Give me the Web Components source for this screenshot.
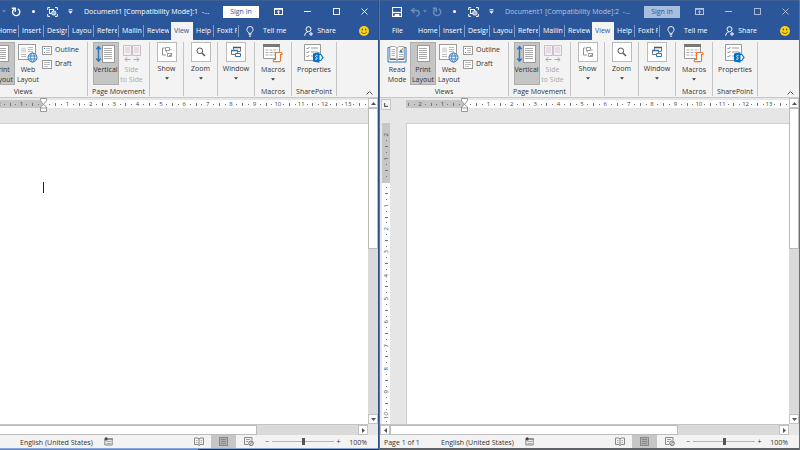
<!DOCTYPE html>
<html lang="en">
<head>
<meta charset="utf-8">
<title>Document1 - Word</title>
<style>
html, body { margin: 0; height: 100%; overflow: hidden; background: #dadada; }
body { font: 7px/10px "Open Sans", "Noto Sans", sans-serif; color: #333; }
</style>
</head>
<body>
<split-desktop>
  <word-window slot="left" active number="1"></word-window>
  <word-window slot="right" number="2"></word-window>
</split-desktop>

<script>
const define = (name, html, setup) => {
  const template = document.createElement('template');
  template.innerHTML = html;
  customElements.define(name, class extends HTMLElement {
    constructor() {
      super();
      this.attachShadow({ mode: 'open' });
    }
    connectedCallback() {
      if (this.shadowRoot.childNodes.length) return;
      const copy = template.content.cloneNode(true);
      if (setup) setup(this, copy);
      this.shadowRoot.append(copy);
    }
  });
};

const lines = (x1, x2, ys, color) => ys.map(y => `<path d="M${x1} ${y}H${x2}" stroke="${color}"/>`).join('');
const sheet = (x, y, w, h) => `<rect x="${x}.5" y="${y}.5" width="${w}" height="${h}" fill="#fff" stroke="#999"/>`;

const icons = {
  save: [10, 10, `<path d="M.5 .5h9v9h-9z" fill="none" stroke="#fff" stroke-width="1.200"/><path d="M1 5.500h8" stroke="#fff" stroke-width="1.200"/><path d="M3 9V7.500h4v1.500" fill="#fff" stroke="#fff"/>`],
  undo: [10, 10, `<path d="M4.500 1 1.500 3.500 4.500 6M1.500 3.500H6.500a2.500 2.500 0 0 1 0 5.500" fill="none" stroke="currentColor" stroke-width="1.300"/>`],
  redo: [10, 10, `<path d="M6.800 1.800A3.600 3.600 0 1 1 2.800 2.300M.8 1.300h3.400v3.400" fill="none" stroke="currentColor" stroke-width="1.400"/>`],
  group: [11, 10, `<path d="M.7 3V.6h2.400M8 .6h2.400V3M10.400 7v2.400H8M3 9.400H.7V7" fill="none" stroke="#fff"/><rect x="2.500" y="2.500" width="4" height="4" fill="none" stroke="#fff"/><circle cx="6.800" cy="6" r="2.200" fill="#9db4d8" stroke="#fff" stroke-width=".8"/>`],
  more: [5, 5, `<path d="M.5 .8h4" stroke="#fff"/><path d="M.3 2.300h4.400L2.500 4.700z" fill="#fff"/>`],
  caret: [4, 3, `<path d="M0 .3h4L2 2.600z" fill="currentColor"/>`],
  display: [9, 7, `<rect x=".5" y=".5" width="8" height="6" fill="none" stroke="currentColor"/><path d="M1 1.300h7" stroke="currentColor"/><path d="M4.500 6V3M3 4.300 4.500 2.900 6 4.300" fill="none" stroke="currentColor" stroke-width=".9"/>`],
  min: [7, 7, `<path d="M0 3.500h7" stroke="currentColor"/>`],
  max: [7, 7, `<rect x=".5" y=".5" width="6" height="6" fill="none" stroke="currentColor" stroke-width=".9"/>`],
  close: [7, 7, `<path d="M.5 .5l6 6M6.500 .5l-6 6" stroke="currentColor" stroke-width=".9"/>`],
  bulb: [8, 11, `<path d="M2.700 7.300C2.600 6 .9 5.400 .9 3.600a3.100 3.100 0 0 1 6.200 0c0 1.800-1.700 2.400-1.800 3.700zM2.700 8.700h2.600M3 10.200h2" fill="none" stroke="#fff" stroke-width=".9"/>`],
  share: [9, 10, `<circle cx="4.500" cy="3.200" r="2.500" fill="none" stroke="#fff"/><path d="M.7 9.700c.2-2.500 1.600-3.700 3.300-3.900M5 8h4M7 6v4" fill="none" stroke="#fff"/>`],
  smiley: [10, 10, `<circle cx="5" cy="5" r="5" fill="#fcd116"/><ellipse cx="3.300" cy="3.600" rx=".7" ry="1" fill="#5c4a00"/><ellipse cx="6.700" cy="3.600" rx=".7" ry="1" fill="#5c4a00"/><path d="M2 5.800q3 3.600 6 0" fill="none" stroke="#5c4a00" stroke-width=".8"/>`],
  read: [20, 18, `<path d="M1 2.500h2v12h6.500l.5 1 .5-1H17v-12h2V17H1z" fill="#fff" stroke="#2e75b6"/><path d="M3 1.500h5l2 1.500 2-1.500h5v12h-5l-2 1.500-2-1.500H3z" fill="#fff" stroke="#999" stroke-width=".8"/><path d="M10 3v12" stroke="#999"/>${lines(4.500, 8, [4.500, 6.500, 8.500, 10.500], '#b5b5b5')}${lines(12, 16, [9.500, 11.500], '#b5b5b5')}<path d="M12 7.500l2-3.500 2 3.500z" fill="#2e75b6"/><circle cx="15.500" cy="4" r="1" fill="#e8a33d"/>`],
  print: [14, 18, `${sheet(1, 0, 12, 16)}${lines(3, 11, [3.500, 5.500, 7.500, 9.500, 11.500, 13.500], '#aaa')}`],
  web: [20, 19, `${sheet(0, 0, 17, 15)}<path d="M3 3.500h5v5H3z" fill="#ddd"/>${lines(3, 8, [10.500, 12.500], '#bbb')}${lines(10, 15, [3.500, 5.500, 7.500], '#bbb')}<circle cx="14.500" cy="13.500" r="4.500" fill="#dcebf8" stroke="#2e75b6"/><ellipse cx="14.500" cy="13.500" rx="1.900" ry="4.500" fill="none" stroke="#2e75b6" stroke-width=".8"/><path d="M10.500 12h8M10.500 15h8" stroke="#2e75b6" stroke-width=".8"/>`],
  outline: [10, 9, `${sheet(0, 0, 9, 8)}<path d="M2 2.500h1M2 6.500h1" stroke="#2e75b6"/>${lines(4, 8, [2.500, 4.500, 6.500], '#bbb')}`],
  draft: [10, 9, `${sheet(0, 0, 9, 8)}${lines(2, 8, [2.500, 4.500], '#bbb')}${lines(2, 6, [6.500], '#bbb')}`],
  vertical: [20, 18, `${sheet(6, 0, 12, 17)}${lines(8, 16, [3.500, 5.500, 7.500, 9.500, 11.500, 13.500], '#aaa')}<path d="M2.500 2v14M.3 4.300 2.500 1.700 4.700 4.300M.3 13.500 2.500 16.200 4.700 13.500" fill="none" stroke="#2e75b6" stroke-width="1.400"/>`],
  side: [18, 18, `<path d="M.5 .5h8v10h-8zM9.500 .5h8v10h-8z" fill="#f7eef4" stroke="#cbbfc8"/>${lines(2, 7, [3, 5, 7], '#d3c9d0')}${lines(11, 16, [3, 5, 7], '#d3c9d0')}<path d="M2 14.500h5.500M4.200 12.300 2 14.500l2.200 2.200M10.500 14.500H16M13.800 12.300 16 14.500l-2.200 2.200" fill="none" stroke="#aaa"/>`],
  show: [12, 12, `<path d="M4.500 1.500h4v3h-4zM6.500 7.500h4v3h-4z" fill="#fff" stroke="#808080" stroke-width=".8"/><path d="M3.500 2H1.500v7H5M4.500 4.500l1.500 2M9 4.500l1.500-1.500M8 9l1 1 2-2.500" fill="none" stroke="#777" stroke-width=".8"/>`],
  zoom: [10, 10, `<circle cx="3.800" cy="3.800" r="2.800" fill="none" stroke="#555"/><path d="M6 6l3 3" stroke="#555" stroke-width="1.500"/>`],
  window: [12, 12, `<path d="M3.500 1.500h7v4h-7z" fill="#fff" stroke="#777"/><path d="M3 1.500h8" stroke="#555" stroke-width="1.500"/><path d="M1.500 4.500h6v4h-6z" fill="#fff" stroke="#777"/><path d="M1 4.500h7" stroke="#2e75b6" stroke-width="1.500"/><path d="M5.500 7.500h5v3h-5z" fill="#fff" stroke="#2e75b6"/>`],
  macros: [20, 19, `<path d="M.5 .5h16v14H.5z" fill="#fff" stroke="#999"/><path d="M0 1.500h17" stroke="#777" stroke-width="3"/>${[6, 8.500, 11].map(y => `<path d="M2.500 ${y}H15" stroke="#aaa" stroke-dasharray="3 1"/>`).join('')}<path d="M12.500 8.500h5.500a1 1 0 0 1 1 1v1h-1.500v6a1.200 1.200 0 0 1-1.200 1.200H11a1.200 1.200 0 0 1 0-2.200h1.500z" fill="#fff" stroke="#e8762d" stroke-width="1.200"/>`],
  properties: [20, 19, `<path d="M.5 .5h16v16H.5z" fill="#fff" stroke="#999"/>${lines(7, 14, [4, 8, 12], '#999')}<path d="M2.500 4l1 1 2-2M2.500 8l1 1 2-2M2.500 12l1 1 2-2" fill="none" stroke="#666" stroke-width=".8"/><path d="M14 10.500h2.800l2.200 3-2.200 3H14z" fill="#fff" stroke="#0072c6" stroke-width="1.200"/><path d="M9 9.500l6.500-1.300v10.600L9 17.500z" fill="#0072c6"/><path d="M13.500 11.700c-1.300-.8-2.500.3-1.500 1.300.8.700 1.500 1 1 1.900-.5.700-1.400.4-2 0" fill="none" stroke="#fff" stroke-width=".9"/>`],
  chevron: [7, 4, `<path d="M.5 3.500l3-3 3 3" fill="none" stroke="#555"/>`],
  up: [5, 3, `<path d="M0 3l2.500-3L5 3z" fill="#555"/>`],
  down: [5, 3, `<path d="M0 0l2.500 3L5 0z" fill="#555"/>`],
  left: [3, 5, `<path d="M3 0L0 2.500 3 5z" fill="#555"/>`],
  right: [3, 5, `<path d="M0 0l3 2.500L0 5z" fill="#555"/>`],
  tabstop: [5, 4, `<path d="M.6 0v3.400H4" fill="none" stroke="#666" stroke-width="1.200"/>`],
  indent: [7, 14, `<path d="M.5 .5h6v2.200L3.500 6.500.5 2.700zM3.500 6.500l3 2.500v4.500h-6V9zM.5 10h6" fill="#fff" stroke="#8c8c8c" stroke-width=".9"/>`],
  record: [9, 9, `<path d="M.8 2.500v5.500h7.400V2.500" fill="#eee" stroke="#888"/><path d="M4 2h5" stroke="#777" stroke-width="1.500"/><circle cx="2.200" cy="1.900" r="1.700" fill="#444"/>${lines(2.500, 7, [4.500, 6.500], '#aaa')}`],
  book: [10, 9, `<path d="M.5 1h3.500l1 1 1-1h3.500v6.500H6l-1 1-1-1H.5zM5 2v7" fill="none" stroke="#888"/><path d="M2 3.500h1.500M2 5.500h1.500M6.500 3.500H8M6.500 5.500H8" stroke="#999" stroke-width=".8"/>`],
  layout: [9, 9, `<rect x=".5" y=".5" width="8" height="8" fill="#b0b0b0" stroke="#888"/>${lines(2, 7, [2.500, 4.500, 6.500], '#888')}`],
  webview: [10, 9, `<path d="M4 7.500H.5v-7h7.500v3" fill="none" stroke="#888"/>${lines(2, 6, [2.500], '#999')}${lines(2, 4, [4.500], '#999')}<circle cx="7" cy="6.300" r="2.300" fill="#ddd" stroke="#777"/><path d="M5.500 7.800l3-3" stroke="#777" stroke-width=".8"/>`]
};

define('ui-icon', `<style>:host{display:inline-block;flex:none;line-height:0}svg{display:block}</style>`, (host, copy) => {
  const [w, h, body] = icons[host.getAttribute('name')];
  const box = document.createElement('div');
  box.innerHTML = `<svg width="${w}" height="${h}" viewBox="0 0 ${w} ${h}" aria-hidden="true">${body}</svg>`;
  copy.append(box.firstChild);
});

define('split-desktop', `<style>
:host{display:grid;grid-template-columns:379fr 421fr;height:100vh;overflow:hidden}
div{min-width:0;overflow:hidden;display:grid}
.left ::slotted(*){margin-left:-42px}
</style><div class="left"><slot name="left"></slot></div><div><slot name="right"></slot></div>`);

define('title-bar', `<style>
:host{display:flex;align-items:center;height:22px;box-sizing:border-box;padding-left:6px;border-top:1px solid #3d5f92;background:#2b579a;color:#fff;--dim:#6e8dbd}
:host([inactive]){color:#b3c4de}
button{all:unset;display:flex;align-items:center;justify-content:center;height:20px}
.save{width:22px}.undo{width:21px;gap:3px;color:var(--dim)}.redo{width:16px;color:#fff}
:host([inactive]) .redo{color:var(--dim)}
.touch{width:18px}.dot{width:3px;height:3px;border-radius:50%;background:#fff}
.group{width:20px}.more{width:16px}
h1{all:unset;flex:1;min-width:0;padding-left:6px;white-space:pre;overflow:hidden}
.sign{width:36px;height:12px;background:#fff;color:#2b579a;margin-right:5px}
:host([inactive]) .sign{background:#a9bedd}
.win{width:29px}.end{width:28px}
</style>
<button class="save" aria-label="Save"><ui-icon name="save"></ui-icon></button>
<button class="undo" aria-label="Undo"><ui-icon name="undo"></ui-icon><ui-icon name="caret"></ui-icon></button>
<button class="redo" aria-label="Redo"><ui-icon name="redo"></ui-icon></button>
<button class="touch" aria-label="Touch mode"><span class="dot"></span></button>
<button class="group" aria-label="Group"><ui-icon name="group"></ui-icon></button>
<button class="more" aria-label="Customize toolbar"><ui-icon name="more"></ui-icon></button>
<h1><slot></slot></h1>
<button class="sign">Sign in</button>
<button class="win" aria-label="Ribbon display"><ui-icon name="display"></ui-icon></button>
<button class="win" aria-label="Minimize"><ui-icon name="min"></ui-icon></button>
<button class="end" aria-label="Maximize"><ui-icon name="max"></ui-icon></button>
<button class="end" aria-label="Close"><ui-icon name="close"></ui-icon></button>`);

define('ribbon-tab', `<style>
:host{display:block;flex:none;width:25px}
button{all:unset;display:block;box-sizing:border-box;width:100%;height:18px;padding:0 2px 0 3px}
span{display:block;overflow:hidden;white-space:nowrap;line-height:18px}
:host([sep]) button{background:linear-gradient(#7d99c6,#7d99c6) right center/1px 12px no-repeat}
:host([selected]) button{background:#f3f3f3;color:#2b579a}
</style><button role="tab"><span><slot></slot></span></button>`);

define('tab-strip', `<style>
:host{display:flex;height:18px;background:#2b579a;color:#fff}
button{all:unset;display:flex;align-items:center;gap:4px;white-space:nowrap}
.file{width:35px;justify-content:center}
.tell{padding-left:7px;gap:9px}.share{margin-left:auto;margin-right:23px}.smile{margin-right:9px}
ribbon-tab.wide{width:27px}ribbon-tab.view{width:22px}ribbon-tab.help{width:21px}
</style>
<button class="file">File</button>
<ribbon-tab sep>Home</ribbon-tab><ribbon-tab sep>Insert</ribbon-tab><ribbon-tab sep>Design</ribbon-tab><ribbon-tab sep aria-label="Layout">Layou</ribbon-tab><ribbon-tab sep aria-label="References">Refere</ribbon-tab><ribbon-tab sep aria-label="Mailings">Mailin</ribbon-tab><ribbon-tab class="wide">Review</ribbon-tab><ribbon-tab class="view" selected>View</ribbon-tab><ribbon-tab sep class="help">Help</ribbon-tab><ribbon-tab sep>Foxit F</ribbon-tab>
<button class="tell"><ui-icon name="bulb"></ui-icon>Tell me</button>
<button class="share"><ui-icon name="share"></ui-icon>Share</button>
<button class="smile" aria-label="Feedback"><ui-icon name="smiley"></ui-icon></button>`);

define('ribbon-button', `<style>
:host{display:block;flex:none;width:26px}
button{all:unset;display:flex;flex-direction:column;align-items:center;box-sizing:border-box;width:100%;height:43px;text-align:center;white-space:nowrap}
.art{flex:none;height:23px;display:flex;align-items:center;justify-content:center;box-sizing:border-box}
.label{width:max-content}
:host([selected]) button{background:#c5c5c5;box-shadow:inset 0 0 0 1px #adadad}
:host([disabled]) button{color:#aaa}
:host([boxed]) .art{width:20px;height:20px;background:#fff;border:1px solid #bbb;margin-bottom:2px}
ui-icon.drop{margin-top:3px}
</style><button><span class="art"></span><span class="label"><slot></slot></span></button>`, (host, copy) => {
  const icon = document.createElement('ui-icon');
  icon.setAttribute('name', host.getAttribute('icon'));
  copy.querySelector('.art').append(icon);
  if (host.hasAttribute('disabled')) copy.querySelector('button').disabled = true;
  if (host.hasAttribute('drop')) {
    const caret = document.createElement('ui-icon');
    caret.setAttribute('name', 'caret');
    caret.className = 'drop';
    copy.querySelector('button').append(caret);
  }
});

define('ribbon-group', `<style>
:host{display:flex;flex-direction:column;flex:none;height:54px;box-sizing:border-box;border-right:1px solid #c6c6c6}
.items{display:flex;justify-content:var(--items,center);height:46px}
.name{text-align:center;line-height:8px;white-space:nowrap}
</style><div class="items"><slot></slot></div><div class="name"></div>`, (host, copy) => {
  copy.querySelector('.name').textContent = host.getAttribute('label') || '';
});

define('view-ribbon', `<style>
:host{display:flex;height:58px;box-sizing:border-box;padding-top:2px;background:#f3f3f3;border-bottom:1px solid #c8c8c8}
.views{width:129px;--items:flex-end}.move{width:62px}.a{width:34px}.b{width:34px}.c{width:37px}.d{width:37px}.e{width:45px}
.list{display:flex;flex-direction:column;gap:4px;width:46px;padding-left:1px;box-sizing:border-box}
.list button{all:unset;display:flex;align-items:center;gap:3px;height:10px}
.list button:first-child{margin-top:3px}
.fold{all:unset;display:flex;margin-left:auto;margin-right:5px;align-self:flex-end;padding-bottom:2px}
</style>
<ribbon-group class="views" label="Views"><ribbon-button icon="read">Read<br>Mode</ribbon-button><ribbon-button icon="print" selected>Print<br>Layout</ribbon-button><ribbon-button icon="web">Web<br>Layout</ribbon-button><div class="list"><button><ui-icon name="outline"></ui-icon>Outline</button><button><ui-icon name="draft"></ui-icon>Draft</button></div></ribbon-group>
<ribbon-group class="move" label="Page Movement"><ribbon-button icon="vertical" selected>Vertical</ribbon-button><ribbon-button icon="side" disabled>Side<br>to Side</ribbon-button></ribbon-group>
<ribbon-group class="a"><ribbon-button icon="show" boxed drop>Show</ribbon-button></ribbon-group>
<ribbon-group class="b"><ribbon-button icon="zoom" boxed drop>Zoom</ribbon-button></ribbon-group>
<ribbon-group class="c"><ribbon-button icon="window" boxed drop>Window</ribbon-button></ribbon-group>
<ribbon-group class="d" label="Macros"><ribbon-button icon="macros" drop>Macros</ribbon-button></ribbon-group>
<ribbon-group class="e" label="SharePoint"><ribbon-button icon="properties">Properties</ribbon-button></ribbon-group>
<button class="fold" aria-label="Collapse ribbon"><ui-icon name="chevron"></ui-icon></button>`);

define('ruler-scale', `<style>
:host{display:flex;font-size:6px;line-height:8px;color:#444;min-width:0;min-height:0}
:host([vertical]){flex-direction:column}
i{flex:1 1 0;min-width:0;min-height:0;display:flex;align-items:center;justify-content:center;font-style:normal}
b{display:block;width:1px;height:1px;background:#777}
b.tick{height:3px}
:host([vertical]) b.tick{width:3px;height:1px}
:host([vertical]) span{writing-mode:vertical-rl;transform:rotate(180deg)}
</style>`, (host, copy) => {
  const from = +host.getAttribute('from'), to = +host.getAttribute('to');
  for (let q = from; q <= to; q++) {
    const cell = document.createElement('i');
    if (q % 4 === 0) {
      const n = document.createElement('span');
      n.textContent = Math.abs(q / 4);
      cell.append(n);
    } else {
      const mark = document.createElement('b');
      if (q % 2 === 0) mark.className = 'tick';
      cell.append(mark);
    }
    copy.append(cell);
  }
});

define('scroll-bar', `<style>
:host{display:flex;flex-direction:column;background:#dadada;box-sizing:border-box;min-width:0;min-height:0}
:host([horizontal]){flex-direction:row}
button{all:unset;flex:none;width:10px;height:10px;box-sizing:border-box;display:flex;align-items:center;justify-content:center;background:#fff;border:1px solid #c3c3c3}
.track{flex:1;display:flex;flex-direction:inherit}
.thumb{box-sizing:border-box;background:#fff;border:1px solid #bcbcbc;flex:0 0 46%}
:host([horizontal]) .thumb{flex-basis:74%}
</style><button class="first" aria-label="Scroll back"></button><div class="track"><div class="thumb"></div></div><button class="last" aria-label="Scroll forward"></button>`, (host, copy) => {
  const flat = host.hasAttribute('horizontal');
  copy.querySelector('.first').innerHTML = `<ui-icon name="${flat ? 'left' : 'up'}"></ui-icon>`;
  copy.querySelector('.last').innerHTML = `<ui-icon name="${flat ? 'right' : 'down'}"></ui-icon>`;
});

define('document-view', `<style>
:host{display:grid;grid-template:25px 1fr 11px / 26px 1fr 10px;min-height:0;background:#e6e6e6}
.corner{display:flex;align-items:center;justify-content:center;width:10px;height:11px;box-sizing:border-box;margin:1px;background:#f3f3f3;border:1px solid #c6c6c6}
.top{display:flex;height:8px;margin-top:2px;position:relative}
.top .before{width:59px;flex:none;box-sizing:border-box;background:#c6c6c6;padding-right:3px}
.top .after{flex:1;background:#fff;padding-left:3px}
.top ui-icon{position:absolute;left:55px;top:-2px}
.side{display:flex;flex-direction:column;width:8px;margin-left:2px;min-height:0}
.side .before{height:60px;flex:none;box-sizing:border-box;background:#c6c6c6;padding:9px 0 4px}
.side .after{flex:1;background:#fff;padding-top:2px}
.page{background:#fff;border:1px solid #d0d0d0;border-width:1px 0 0 1px;padding:58px 0 0 57px}
.caret{width:1px;height:11px;background:#222}
.v{grid-column:3;grid-row:1/3}
.h{grid-column:1/3;border-top:1px solid #c3c3c3}
</style>
<div class="corner"><ui-icon name="tabstop"></ui-icon></div>
<div class="top"><ruler-scale class="before" from="-10" to="-1"></ruler-scale><ruler-scale class="after" from="1" to="55"></ruler-scale><ui-icon name="indent"></ui-icon></div>
<scroll-bar class="v"></scroll-bar>
<div class="side"><ruler-scale class="before" vertical from="-8" to="-1"></ruler-scale><ruler-scale class="after" vertical from="1" to="41"></ruler-scale></div>
<div class="page"></div>
<scroll-bar class="h" horizontal></scroll-bar>`, (host, copy) => {
  if (host.hasAttribute('caret')) copy.querySelector('.page').innerHTML = '<div class="caret"></div>';
});

define('status-bar', `<style>
:host{display:flex;align-items:center;height:13px;background:#f3f3f3;white-space:nowrap}
span,output{padding-top:2px}
.page{width:57px;padding-left:4px}.lang{width:84px}
button{all:unset;display:flex;align-items:center;justify-content:center;width:25px;height:13px}
.spacer{flex:1}
.on{background:#c6c6c6}
.step{width:9px}
input{appearance:none;margin:0;width:62px;height:11px;background:linear-gradient(#b4b4b4,#b4b4b4) center/100% 1px no-repeat}
input::-webkit-slider-thumb{appearance:none;width:3px;height:7px;background:#555}
output{width:24px;text-align:right;margin-right:11px}
.minus{margin-left:2px}
</style>
<span class="page">Page 1 of 1</span><span class="lang">English (United States)</span>
<ui-icon name="record"></ui-icon><span class="spacer"></span>
<button aria-label="Read Mode"><ui-icon name="book"></ui-icon></button>
<button class="on" aria-label="Print Layout"><ui-icon name="layout"></ui-icon></button>
<button aria-label="Web Layout"><ui-icon name="webview"></ui-icon></button>
<button class="step minus" aria-label="Zoom out">−</button>
<input type="range" aria-label="Zoom" min="0" max="100" value="50">
<button class="step" aria-label="Zoom in">+</button>
<output>100%</output>`);

define('word-window', `<style>
:host{display:grid;grid-template-columns:minmax(0,1fr);grid-template-rows:auto auto auto minmax(0,1fr) auto 2px;box-sizing:border-box;min-width:0;height:100vh;background:#f3f3f3;border:solid #6b6f75;border-width:0 1px}
:host([active]){border-color:#2b4f87}
.edge{background:#5f6266}
:host([active]) .edge{background:linear-gradient(90deg,#5f8fcf 57%,#22335a 57%) bottom/100% 1px no-repeat,#86a5d4}
</style>
<title-bar></title-bar><tab-strip></tab-strip><view-ribbon></view-ribbon><document-view></document-view><status-bar></status-bar><div class="edge"></div>`, (host, copy) => {
  const bar = copy.querySelector('title-bar');
  bar.textContent = `Document1 [Compatibility Mode]:${host.getAttribute('number')}  -...`;
  if (host.hasAttribute('active')) copy.querySelector('document-view').setAttribute('caret', '');
  else bar.setAttribute('inactive', '');
});
</script>
</body>
</html>
